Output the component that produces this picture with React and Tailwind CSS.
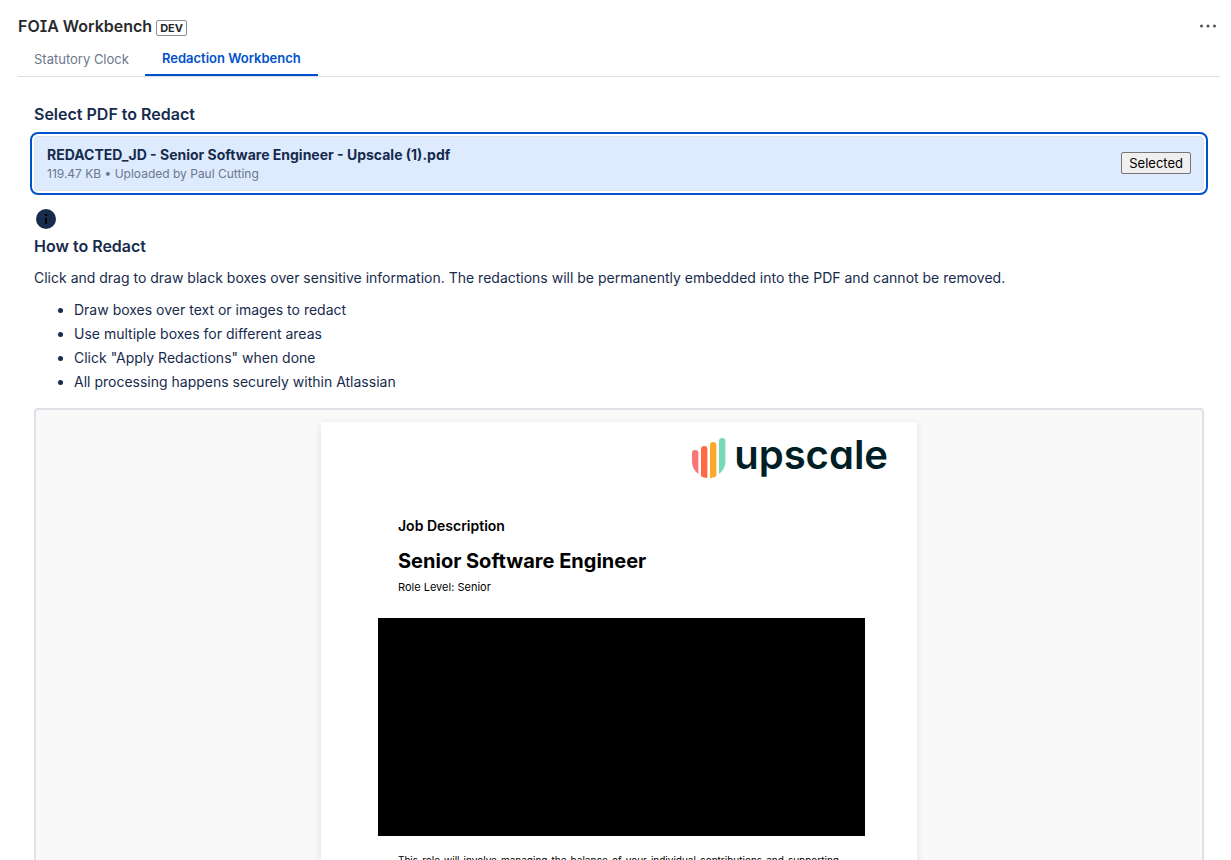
const steps = [
  'Draw boxes over text or images to redact',
  'Use multiple boxes for different areas',
  'Click "Apply Redactions" when done',
  'All processing happens securely within Atlassian',
];

function Header() {
  return (
    <header className="flex h-5 items-center justify-between">
      <div className="flex items-center gap-1">
        <h1 className="text-base leading-5 font-semibold text-[#292a2e] [font-feature-settings:'cv08']">
          FOIA Workbench
        </h1>
        <span className="mt-1 rounded-xs border border-[#8c8f97] px-[3px] text-[11px] leading-[14px] font-bold text-[#292a2e]">
          DEV
        </span>
      </div>
      <button type="button" aria-label="More actions" className="mr-1 text-[#505258]">
        <svg width="16" height="16" viewBox="0 0 16 16" fill="currentColor">
          <circle cx="1.5" cy="8" r="1.5" />
          <circle cx="8" cy="8" r="1.5" />
          <circle cx="14.5" cy="8" r="1.5" />
        </svg>
      </button>
    </header>
  );
}

function Tabs() {
  return (
    <div role="tablist" className="mt-3 flex h-[29px] border-b border-[#dddee1] text-[13px] leading-5">
      <button type="button" role="tab" aria-selected="false" className="px-4 pb-1.5 text-[#6b778c]">
        Statutory Clock
      </button>
      <button
        type="button"
        role="tab"
        aria-selected="true"
        className="border-b-2 border-[#0052cc] px-[17px] pb-1.5 font-semibold text-[#0052cc]"
      >
        Redaction Workbench
      </button>
    </div>
  );
}

function FileCard() {
  return (
    <div className="-mx-1 mt-2 rounded-lg border-2 border-[#0052cc] p-0.5">
      <div className="flex items-center justify-between rounded-sm border border-[#dfe1e6] bg-[#deebff] px-3 py-2">
        <div>
          <p className="text-sm leading-5 font-bold text-[#172b4d]">
            REDACTED_JD - Senior Software Engineer - Upscale (1).pdf
          </p>
          <p className="mt-px text-xs leading-4 text-[#6b778c]">119.47 KB • Uploaded by Paul Cutting</p>
        </div>
        <button
          type="button"
          className="mb-0.5 rounded-xs border border-[#767676] bg-[#efefef] px-[7px] text-[13px] leading-5 text-black"
        >
          Selected
        </button>
      </div>
    </div>
  );
}

function InfoIcon() {
  return (
    <svg width="24" height="24" viewBox="0 0 24 24" className="mt-3" aria-hidden="true">
      <circle cx="12" cy="12" r="10" fill="#172b4d" />
      <rect x="11" y="11" width="2" height="6" rx="0.5" fill="#000" />
      <circle cx="12" cy="8" r="1.2" fill="#000" />
    </svg>
  );
}

function UpscaleLogo() {
  return (
    <div className="flex h-10 items-center justify-end gap-2">
      <svg width="34" height="40" viewBox="0 0 34 40" aria-hidden="true">
        <path d="M0 15.200a3.200 3.200 0 0 1 6.400 0V36C2.300 33 0 28.500 0 23z" fill="#f87678" />
        <path d="M9 11.200a3.200 3.200 0 0 1 6.400 0V40c-2.400-.2-4.500-.8-6.400-1.800z" fill="#ff6b42" />
        <path d="M18 7.200a3.200 3.200 0 0 1 6.400 0V38.200c-1.900 1-4 1.600-6.400 1.800z" fill="#fba92c" />
        <path d="M27 3.200a3.200 3.200 0 0 1 6.400 0V23c0 5.500-2.300 10-6.400 13z" fill="#76dbb6" />
      </svg>
      <span className="pb-1.5 text-[40px] leading-9 font-semibold text-[#001e26] [font-feature-settings:'cv11']">
        upscale
      </span>
    </div>
  );
}

function PdfPage() {
  return (
    <article className="mx-auto w-full max-w-[596px] bg-white pt-4 pb-16 font-['Inter',sans-serif] text-black shadow-[0_2px_8px_rgba(0,0,0,0.1)]">
      <div className="pr-[29px]">
        <UpscaleLogo />
      </div>
      <div className="pr-[78px] pl-[77px]">
        <p className="mt-[38px] text-sm leading-5 font-semibold">Job Description</p>
        <h3 className="mt-[11px] text-xl leading-7 font-bold">Senior Software Engineer</h3>
        <p className="mt-1 text-[11px] leading-4">Role Level: Senior</p>
      </div>
      <div className="mt-[23px] mr-[52px] ml-[57px] h-[218px] bg-black" />
      <p className="mt-4 mr-[78px] ml-[77px] text-[10px] leading-4 [text-align-last:justify]">
        This role will involve managing the balance of your individual contributions and supporting
      </p>
    </article>
  );
}

export default function App() {
  return (
    <div className="h-screen overflow-hidden bg-white pt-4 pr-[11px] pl-[18px] font-['Inter',sans-serif] text-[#172b4d]">
      <Header />
      <Tabs />
      <main className="px-4 pt-[27px]">
        <h2 className="text-base leading-5 font-semibold">Select PDF to Redact</h2>
        <FileCard />
        <InfoIcon />
        <h2 className="mt-[5px] text-base leading-5 font-semibold">How to Redact</h2>
        <p className="mt-3 text-sm leading-5">
          Click and drag to draw black boxes over sensitive information. The redactions will be permanently embedded
          into the PDF and cannot be removed.
        </p>
        <ul className="mt-3 list-disc space-y-1 pl-10 text-sm leading-5">
          {steps.map((step) => (
            <li key={step}>{step}</li>
          ))}
        </ul>
        <section aria-label="PDF preview" className="mt-4 rounded-sm border-2 border-[#dfe1e6] bg-[#f9f9f9] p-3">
          <PdfPage />
        </section>
      </main>
    </div>
  );
}
